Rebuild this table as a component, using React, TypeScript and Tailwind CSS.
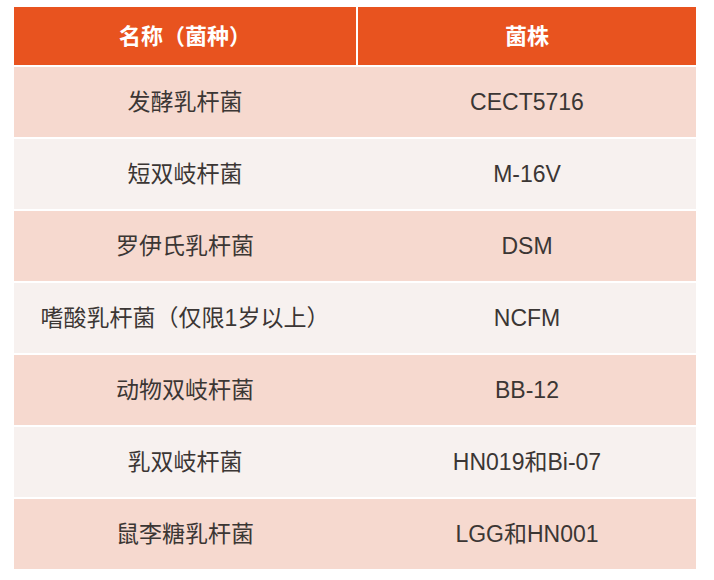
import React from 'react';

const rows = [
  { name: '发酵乳杆菌', strain: 'CECT5716' },
  { name: '短双岐杆菌', strain: 'M-16V' },
  { name: '罗伊氏乳杆菌', strain: 'DSM' },
  { name: '嗜酸乳杆菌（仅限1岁以上）', strain: 'NCFM' },
  { name: '动物双岐杆菌', strain: 'BB-12' },
  { name: '乳双岐杆菌', strain: 'HN019和Bi-07' },
  { name: '鼠李糖乳杆菌', strain: 'LGG和HN001' },
];

export default function App() {
  return (
    <div
      className="min-h-screen w-[714px] bg-white pl-[14px] pt-[7px]"
      style={{ fontFamily: '"Liberation Sans", "Noto Sans CJK SC", sans-serif' }}
    >
      <div className="flex w-[682px] flex-col gap-[2px]">
        {/* header */}
        <div className="flex h-[58px] gap-[2px] text-[22px] font-bold text-white">
          <div className="flex w-[342px] items-center justify-center bg-[#e8531f]">名称（菌种）</div>
          <div className="flex flex-1 items-center justify-center bg-[#e8531f]">菌株</div>
        </div>

        {rows.map((r, i) => (
          <div
            key={r.strain}
            className={`flex h-[70px] text-[23px] text-[#3b3634] ${i % 2 === 0 ? 'bg-[#f6d9cf]' : 'bg-[#f7f1ef]'}`}
          >
            <div className="flex w-[342px] items-center justify-center">{r.name}</div>
            <div className="w-[2px]" />
            <div className="flex flex-1 items-center justify-center">{r.strain}</div>
          </div>
        ))}
      </div>
    </div>
  );
}
